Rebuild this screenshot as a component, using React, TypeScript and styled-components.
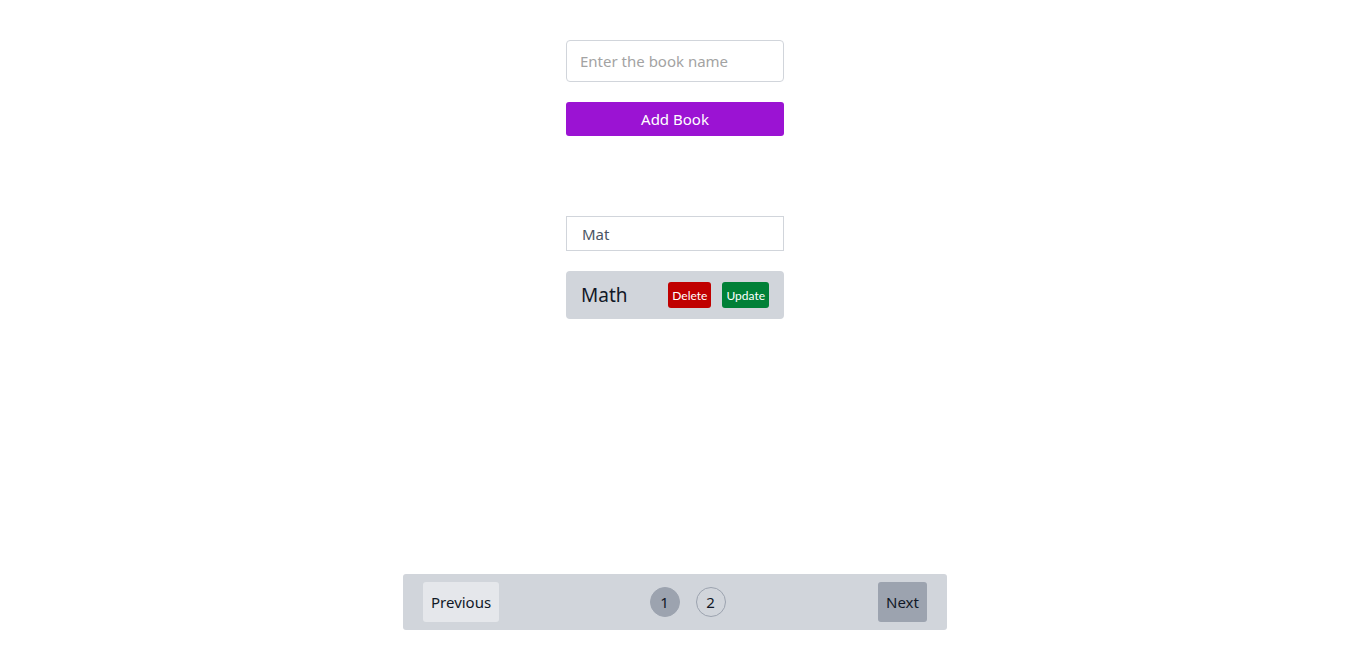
import React, { useState } from "react";
import styled, { createGlobalStyle } from "styled-components";

const Global = createGlobalStyle`
  * { box-sizing: border-box; }
  html, body { margin: 0; padding: 0; background: #ffffff; }
  body { font-family: "Noto Sans", "Open Sans", sans-serif; color: #111827; }
`;

const Page = styled.div`
  min-height: 100vh;
  display: flex;
  flex-direction: column;
  align-items: center;
  padding: 40px 4px 20px 0;
`;

const Column = styled.div`
  width: 218px;
  display: flex;
  flex-direction: column;
`;

const NameInput = styled.input`
  height: 42px;
  width: 100%;
  border: 1px solid #d1d5db;
  border-radius: 4px;
  padding: 0 13px;
  font-family: inherit;
  font-size: 15px;
  color: #374151;
  outline: none;
  &::placeholder { color: #a3a3a3; }
`;

const AddButton = styled.button`
  margin-top: 20px;
  height: 34px;
  width: 100%;
  border: none;
  border-radius: 3px;
  background: #9b13d3;
  color: #ffffff;
  font-family: inherit;
  font-size: 15px;
  cursor: pointer;
`;

const SearchInput = styled.input`
  margin-top: 80px;
  height: 35px;
  width: 100%;
  border: 1px solid #d1d5db;
  border-radius: 0;
  padding: 0 15px;
  font-family: inherit;
  font-size: 15px;
  color: #4b5563;
  outline: none;
`;

const BookCard = styled.div`
  margin-top: 20px;
  height: 48px;
  background: #d1d5db;
  border-radius: 4px;
  display: flex;
  align-items: center;
  padding: 0 15px 0 15px;
`;

const BookTitle = styled.span`
  flex: 1;
  font-size: 19px;
  color: #111827;
`;

const SmallButton = styled.button<{ $bg: string }>`
  height: 26px;
  padding: 0 4px;
  border: none;
  border-radius: 3px;
  background: ${(p) => p.$bg};
  color: #ffffff;
  font-family: "Lato", sans-serif;
  font-size: 12px;
  cursor: pointer;
  & + & { margin-left: 11px; }
`;

const Spacer = styled.div`
  flex: 1;
`;

const Pager = styled.nav`
  width: 544px;
  height: 56px;
  background: #d1d5db;
  border-radius: 3px;
  display: flex;
  align-items: center;
  justify-content: space-between;
  padding: 0 20px;
`;

const PagerButton = styled.button<{ $bg: string }>`
  height: 40px;
  padding: 0 8px;
  border: none;
  border-radius: 3px;
  background: ${(p) => p.$bg};
  color: #111827;
  font-family: inherit;
  font-size: 15px;
  cursor: pointer;
`;

const Pages = styled.div`
  display: flex;
  gap: 16px;
  margin-right: 2px;
`;

const PageDot = styled.button<{ $active?: boolean }>`
  width: 30px;
  height: 30px;
  border-radius: 50%;
  border: 1px solid #9ca3af;
  background: ${(p) => (p.$active ? "#9ca3af" : "transparent")};
  color: #111827;
  font-family: inherit;
  font-size: 15px;
  padding: 0;
  display: flex;
  align-items: center;
  justify-content: center;
  cursor: pointer;
`;

export default function App() {
  const [name, setName] = useState("");
  const [search, setSearch] = useState("Mat");
  return (
    <>
      <Global />
      <Page>
        <Column>
          <NameInput
            placeholder="Enter the book name"
            value={name}
            onChange={(e) => setName(e.target.value)}
          />
          <AddButton>Add Book</AddButton>
          <SearchInput value={search} onChange={(e) => setSearch(e.target.value)} />
          <BookCard>
            <BookTitle>Math</BookTitle>
            <SmallButton $bg="#c00000">Delete</SmallButton>
            <SmallButton $bg="#008037">Update</SmallButton>
          </BookCard>
        </Column>
        <Spacer />
        <Pager>
          <PagerButton $bg="#e5e7eb">Previous</PagerButton>
          <Pages>
            <PageDot $active>1</PageDot>
            <PageDot>2</PageDot>
          </Pages>
          <PagerButton $bg="#9ca3af">Next</PagerButton>
        </Pager>
      </Page>
    </>
  );
}
